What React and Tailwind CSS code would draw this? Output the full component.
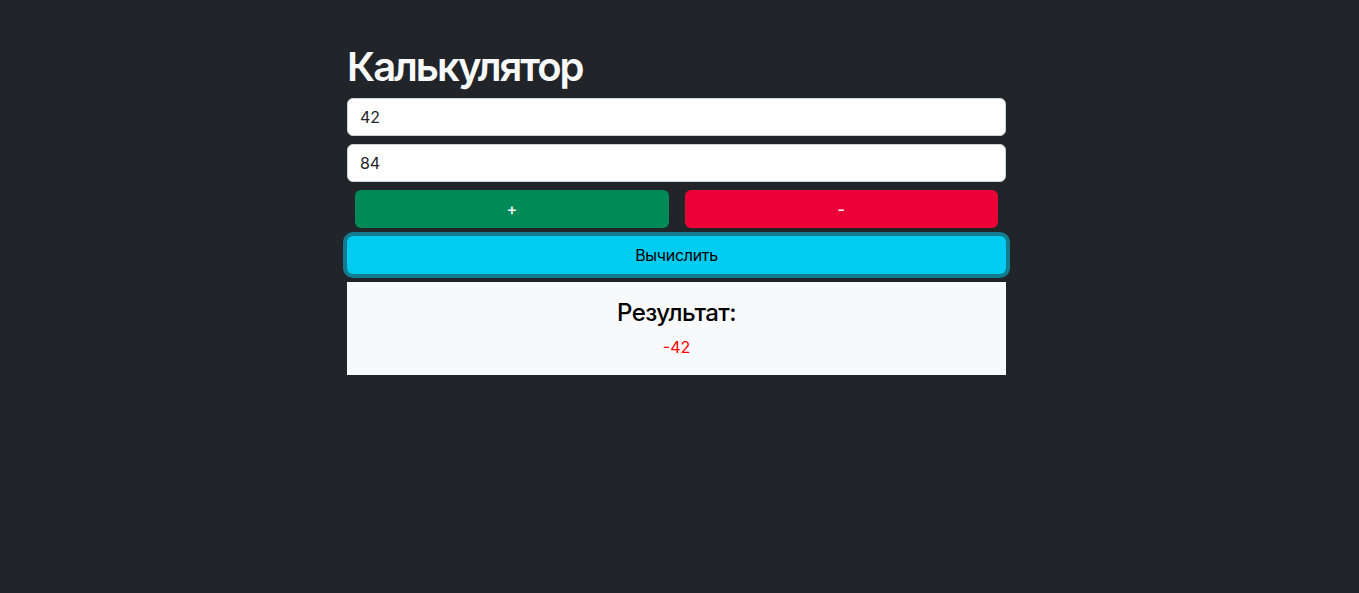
import React, { useState } from 'react';

const App = () => {
  const [a, setA] = useState('42');
  const [b, setB] = useState('84');
  const [op, setOp] = useState('-');
  const [result, setResult] = useState(-42);

  const calculate = () => {
    const x = Number(a);
    const y = Number(b);
    setResult(op === '+' ? x + y : x - y);
  };

  return (
    <div className="min-h-screen bg-[#212529] font-['Inter',sans-serif] text-[#212529]">
      <div className="ml-[347px] w-[659px] pt-[43px]">
        <h1 className="mb-[7px] text-[40px] leading-[48px] font-semibold tracking-[-2px] text-[#f8f9fa]">Калькулятор</h1>
        <input
          value={a}
          onChange={(e) => setA(e.target.value)}
          className="mb-2 block h-[38px] w-full rounded-md border border-[#ced4da] bg-white px-3 text-base tracking-[-0.2px] outline-none"
        />
        <input
          value={b}
          onChange={(e) => setB(e.target.value)}
          className="mb-2 block h-[38px] w-full rounded-md border border-[#ced4da] bg-white px-3 text-base tracking-[-0.2px] outline-none"
        />
        <div className="mb-2 grid grid-cols-2 gap-4 px-2">
          <button
            onClick={() => setOp('+')}
            className="h-[38px] rounded-md bg-[#008b56] text-base font-medium text-white"
          >
            +
          </button>
          <button
            onClick={() => setOp('-')}
            className="h-[38px] rounded-md bg-[#ea0037] text-base font-medium text-white"
          >
            -
          </button>
        </div>
        <button
          onClick={calculate}
          className="mb-2 block h-[38px] w-full rounded-md bg-[#00cbf1] text-base tracking-[-0.3px] text-black ring-4 ring-[#137b8f]"
        >
          Вычислить
        </button>
        <div className="bg-[#f8f9fa] p-4 text-center">
          <h4 className="mb-2 text-2xl leading-[29px] font-medium tracking-[-0.6px] text-black">Результат:</h4>
          <p className="text-base leading-6 text-[#ff0000]">{result}</p>
        </div>
      </div>
    </div>
  );
};

export default App;
